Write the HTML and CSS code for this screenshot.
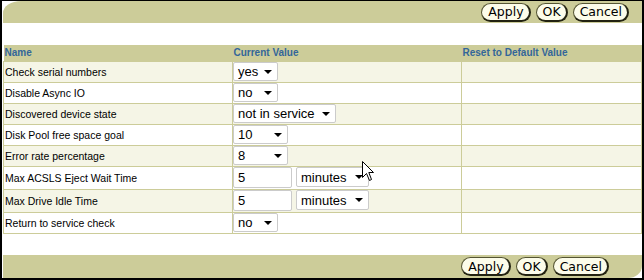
FILE: index.html
```html
<!DOCTYPE html>
<html lang="en">

<head>
    <meta charset="UTF-8">
    <meta name="viewport" content="width=device-width, initial-scale=1.0">
    <title>Library Settings</title>
    <link rel="stylesheet" href="styles.css">
</head>

<body>
    <div class="frame">
        <div class="bar barTop">
            <button class="pill">Apply</button>
            <button class="pill">OK</button>
            <button class="pill">Cancel</button>
        </div>
        <div class="spacer"></div>
        <table class="settings">
            <thead>
                <tr>
                    <th class="colName">Name</th>
                    <th class="colValue">Current Value</th>
                    <th>Reset to Default Value</th>
                </tr>
            </thead>
            <tbody>
                <tr class="odd">
                    <td>Check serial numbers</td>
                    <td class="value"><span class="select w45">yes<i class="caret"></i></span></td>
                    <td></td>
                </tr>
                <tr>
                    <td>Disable Async IO</td>
                    <td class="value"><span class="select w45">no<i class="caret"></i></span></td>
                    <td></td>
                </tr>
                <tr class="odd">
                    <td>Discovered device state</td>
                    <td class="value"><span class="select w103">not in service<i class="caret"></i></span></td>
                    <td></td>
                </tr>
                <tr>
                    <td>Disk Pool free space goal</td>
                    <td class="value"><span class="select w55">10<i class="caret"></i></span></td>
                    <td></td>
                </tr>
                <tr class="odd">
                    <td>Error rate percentage</td>
                    <td class="value"><span class="select w55">8<i class="caret"></i></span></td>
                    <td></td>
                </tr>
                <tr class="tall">
                    <td>Max ACSLS Eject Wait Time</td>
                    <td class="value">
                        <div class="pair">
                            <span class="textInput">5</span>
                            <span class="select w73">minutes<i class="caret"></i></span>
                        </div>
                    </td>
                    <td></td>
                </tr>
                <tr class="odd tall">
                    <td>Max Drive Idle Time</td>
                    <td class="value">
                        <div class="pair">
                            <span class="textInput">5</span>
                            <span class="select w73">minutes<i class="caret"></i></span>
                        </div>
                    </td>
                    <td></td>
                </tr>
                <tr>
                    <td>Return to service check</td>
                    <td class="value"><span class="select w45">no<i class="caret"></i></span></td>
                    <td></td>
                </tr>
            </tbody>
        </table>
        <div class="gap"></div>
        <div class="bar barBottom">
            <button class="pill">Apply</button>
            <button class="pill">OK</button>
            <button class="pill">Cancel</button>
        </div>
        <!-- mouse pointer from the screenshot -->
        <svg class="cursor" width="14" height="21" viewBox="0 0 14 21">
            <path d="M0.5 0.5 L0.5 16.5 L4.5 12.5 L7.5 19.5 L9.5 18.5 L6.8 11.5 L11.5 11.5 Z" fill="#fff" stroke="#000" stroke-width="1" />
        </svg>
    </div>
</body>

</html>
```

FILE: styles.css
```css
* {
    box-sizing: border-box;
}

body {
    margin: 0;
    background-color: #ffffff;
    font-family: "Liberation Sans", Arial, sans-serif;
}

.frame {
    position: relative;
    width: 644px;
    height: 280px;
    border: solid #000000;
    border-width: 1px 2px 2px 2px;
    padding-left: 1px;
    display: flex;
    flex-direction: column;
}

.bar {
    background-color: #cccc99;
    display: flex;
    justify-content: flex-end;
    align-items: center;
    gap: 5px;
}

.barTop {
    height: 22px;
    padding-right: 13px;
    border-top-left-radius: 18px 12px;
}

.barBottom {
    height: 23px;
    padding-right: 33px;
    border-bottom-right-radius: 14px 12px;
}

.spacer {
    height: 22px;
}

.gap {
    flex: 1;
}

.pill {
    height: 19px;
    padding: 0 5px 0 6px;
    border: 1px solid #555533;
    border-right: 2px solid #222211;
    border-bottom: 2px solid #222211;
    border-radius: 10px;
    background-color: #fcfcea;
    font-family: "DejaVu Sans", sans-serif;
    font-size: 12.5px;
    line-height: 15px;
    color: #000000;
}

.settings {
    width: 100%;
    border-collapse: collapse;
    table-layout: fixed;
}

.settings th {
    height: 16px;
    padding: 0 1px;
    background-color: #cccc99;
    color: #336699;
    font-size: 10px;
    font-weight: bold;
    text-align: left;
}

.colName {
    width: 229px;
}

.colValue {
    width: 229px;
}

.settings td {
    height: 21px;
    padding: 0 1px;
    border: 1px solid #cccc99;
    font-size: 10.5px;
    color: #000000;
    background-color: #ffffff;
}

.settings td.value {
    padding: 0;
}

.settings tr.odd td {
    background-color: #f5f5e6;
}

.settings tr.tall td {
    height: 23px;
}

.select {
    display: inline-flex;
    justify-content: space-between;
    align-items: center;
    height: 19px;
    padding: 0 5px 0 4px;
    border: 1px solid #cbcbcb;
    border-radius: 2px;
    background-color: #ffffff;
    font-size: 13px;
    vertical-align: middle;
}

.caret {
    width: 0;
    height: 0;
    border-left: 4px solid transparent;
    border-right: 4px solid transparent;
    border-top: 4px solid #000000;
}

.w45 {
    width: 45px;
}

.w55 {
    width: 55px;
}

.w73 {
    width: 73px;
    height: 20px;
}

.w103 {
    width: 103px;
}

.pair {
    display: flex;
    gap: 4px;
}

.textInput {
    display: flex;
    align-items: center;
    width: 59px;
    height: 21px;
    padding: 0 4px;
    border: 1px solid #cbcbcb;
    border-radius: 2px;
    background-color: #ffffff;
    font-size: 13px;
}

.cursor {
    position: absolute;
    left: 360px;
    top: 160px;
}
```
